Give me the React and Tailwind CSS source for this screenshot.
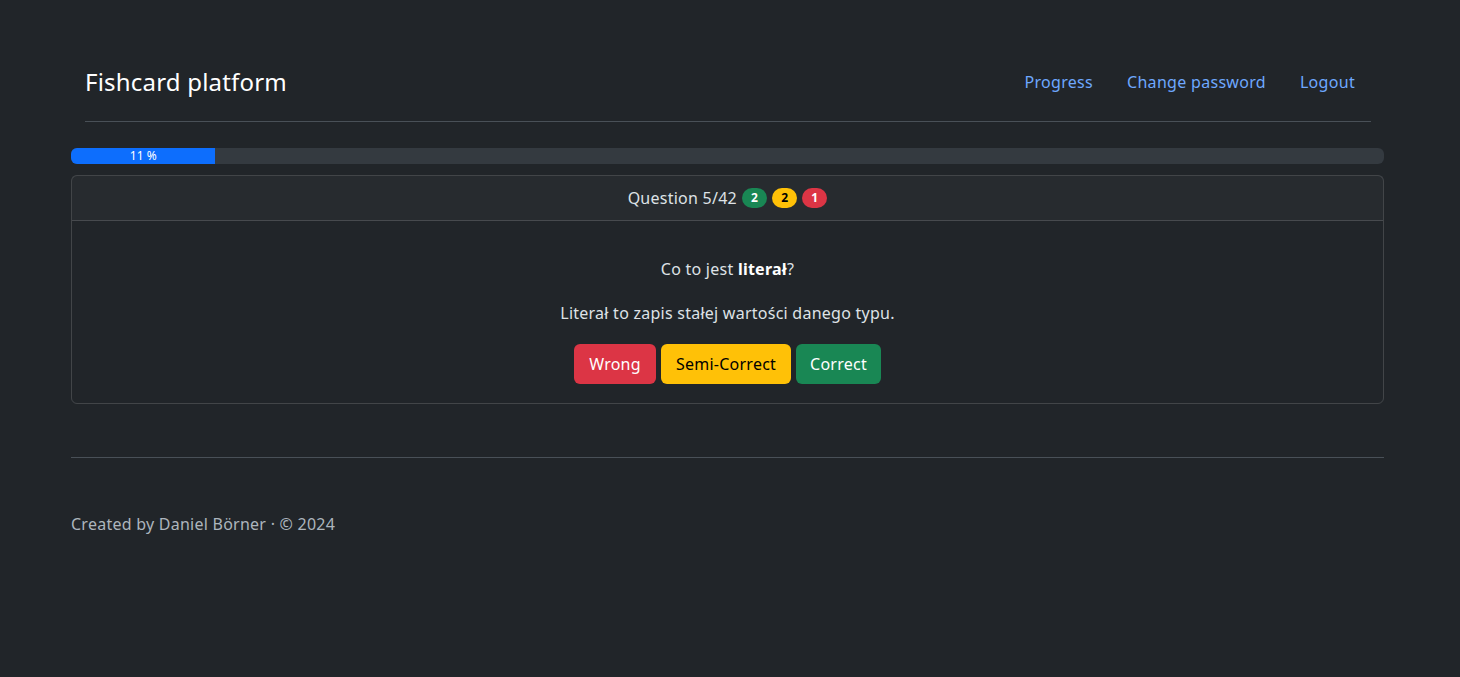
export default function App() {
  const font = { fontFamily: '"Segoe UI", "Noto Sans", "Liberation Sans", sans-serif' };
  return (
    <div className="min-h-[677px] w-full bg-[#212529] text-[#dee2e6] text-base leading-6 tracking-[0.25px]" style={font}>
      <div className="ml-[71px] w-[1313px] pt-[46px]">
        <header className="ml-[14px] mr-[13px] flex items-center justify-between border-b border-[#495057] pt-4 pb-[19px]">
          <span className="text-[24px] leading-[36px] tracking-[0.2px] text-white">Fishcard platform</span>
          <nav className="flex tracking-[0.3px]">
            <a className="px-[17px] py-2 text-[#6ea8fe]" href="#">Progress</a>
            <a className="px-[17px] py-2 text-[#6ea8fe]" href="#">Change password</a>
            <a className="pl-[17px] pr-4 py-2 text-[#6ea8fe]" href="#">Logout</a>
          </nav>
        </header>
        <div className="mt-[26px] flex h-4 overflow-hidden rounded-[6px] bg-[#343a40] text-[12px] leading-4 tracking-normal">
          <div className="flex items-center justify-center bg-[#0d6efd] text-white" style={{ width: '11%' }}>11 %</div>
        </div>
        <div className="mt-[11px] rounded-[6px] border border-[#ffffff26]">
          <div className="flex h-[45px] items-center justify-center gap-[5px] border-b border-[#ffffff26] bg-[#ffffff08]">
            <span>Question 5/42</span>
            <span className="rounded-full bg-[#198754] px-[9px] py-[3px] text-[12px] font-bold leading-[14px] text-white">2</span>
            <span className="rounded-full bg-[#ffc107] px-[9px] py-[3px] text-[12px] font-bold leading-[14px] text-black">2</span>
            <span className="rounded-full bg-[#dc3545] px-[9px] py-[3px] text-[12px] font-bold leading-[14px] text-white">1</span>
          </div>
          <div className="flex flex-col items-center px-4 pb-[19px] pt-[36px]">
            <p>Co to jest <b className="font-bold text-white">literał</b>?</p>
            <p className="mt-[20px]">Literał to zapis stałej wartości danego typu.</p>
            <div className="mt-[19px] flex gap-[5px]">
              <button className="h-10 w-[82px] rounded-[6px] bg-[#dc3545] text-white">Wrong</button>
              <button className="h-10 w-[130px] rounded-[6px] bg-[#ffc107] text-black">Semi-Correct</button>
              <button className="h-10 w-[85px] rounded-[6px] bg-[#198754] text-white">Correct</button>
            </div>
          </div>
        </div>
        <footer className="mt-[53px] border-t border-[#495057] pt-[54px]">
          <p className="text-[#adb5bd]">Created by Daniel Börner · © 2024</p>
        </footer>
      </div>
    </div>
  );
}
